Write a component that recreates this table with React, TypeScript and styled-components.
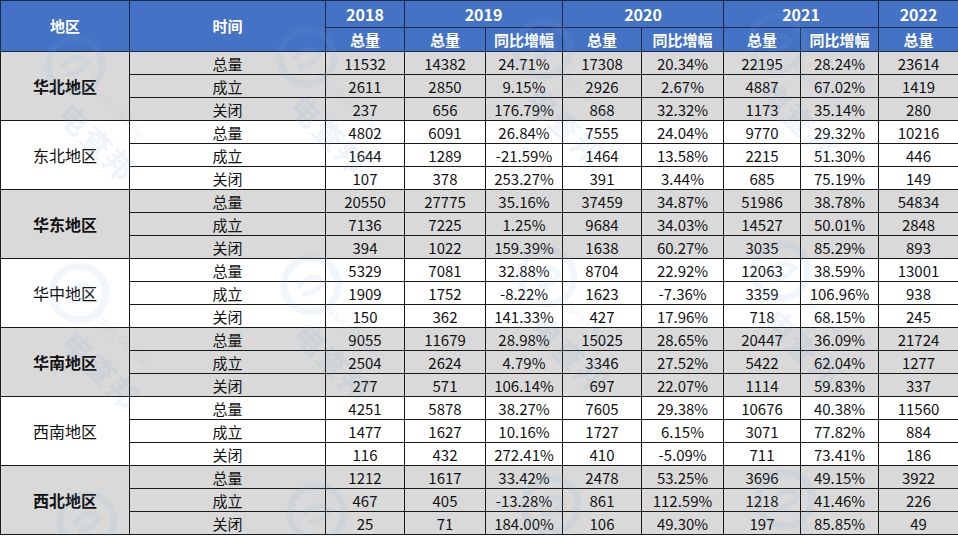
import React from 'react';
import styled, { createGlobalStyle } from 'styled-components';

const GlobalStyle = createGlobalStyle`
    html, body {
        margin: 0;
        padding: 0;
        background: #ffffff;
    }
    body {
        font-family: "Noto Sans CJK SC", "Noto Sans", sans-serif;
        color: #000;
    }
`;

type Group = {
    region: string;
    rows: string[][];
};

const labels = ['总量', '成立', '关闭'];

const groups: Group[] = [
    {
        region: '华北地区',
        rows: [
            ['11532', '14382', '24.71%', '17308', '20.34%', '22195', '28.24%', '23614'],
            ['2611', '2850', '9.15%', '2926', '2.67%', '4887', '67.02%', '1419'],
            ['237', '656', '176.79%', '868', '32.32%', '1173', '35.14%', '280'],
        ],
    },
    {
        region: '东北地区',
        rows: [
            ['4802', '6091', '26.84%', '7555', '24.04%', '9770', '29.32%', '10216'],
            ['1644', '1289', '-21.59%', '1464', '13.58%', '2215', '51.30%', '446'],
            ['107', '378', '253.27%', '391', '3.44%', '685', '75.19%', '149'],
        ],
    },
    {
        region: '华东地区',
        rows: [
            ['20550', '27775', '35.16%', '37459', '34.87%', '51986', '38.78%', '54834'],
            ['7136', '7225', '1.25%', '9684', '34.03%', '14527', '50.01%', '2848'],
            ['394', '1022', '159.39%', '1638', '60.27%', '3035', '85.29%', '893'],
        ],
    },
    {
        region: '华中地区',
        rows: [
            ['5329', '7081', '32.88%', '8704', '22.92%', '12063', '38.59%', '13001'],
            ['1909', '1752', '-8.22%', '1623', '-7.36%', '3359', '106.96%', '938'],
            ['150', '362', '141.33%', '427', '17.96%', '718', '68.15%', '245'],
        ],
    },
    {
        region: '华南地区',
        rows: [
            ['9055', '11679', '28.98%', '15025', '28.65%', '20447', '36.09%', '21724'],
            ['2504', '2624', '4.79%', '3346', '27.52%', '5422', '62.04%', '1277'],
            ['277', '571', '106.14%', '697', '22.07%', '1114', '59.83%', '337'],
        ],
    },
    {
        region: '西南地区',
        rows: [
            ['4251', '5878', '38.27%', '7605', '29.38%', '10676', '40.38%', '11560'],
            ['1477', '1627', '10.16%', '1727', '6.15%', '3071', '77.82%', '884'],
            ['116', '432', '272.41%', '410', '-5.09%', '711', '73.41%', '186'],
        ],
    },
    {
        region: '西北地区',
        rows: [
            ['1212', '1617', '33.42%', '2478', '53.25%', '3696', '49.15%', '3922'],
            ['467', '405', '-13.28%', '861', '112.59%', '1218', '41.46%', '226'],
            ['25', '71', '184.00%', '106', '49.30%', '197', '85.85%', '49'],
        ],
    },
];

const colWidths = [129, 196, 79, 81, 77, 79, 82, 77, 78, 80];

const watermarks = [
    { x: 40, y: 30 }, { x: 272, y: 22 }, { x: 508, y: 14 }, { x: 742, y: 8 },
    { x: 44, y: 258 }, { x: 276, y: 250 }, { x: 512, y: 242 }, { x: 746, y: 236 },
    { x: 52, y: 486 }, { x: 282, y: 478 }, { x: 516, y: 470 }, { x: 750, y: 464 },
];

export default function App() {
    return (
        <>
            <GlobalStyle />
            <Page>
                <Table>
                    <colgroup>
                        {colWidths.map((w, i) => (
                            <col key={i} style={{ width: w }} />
                        ))}
                    </colgroup>
                    <thead>
                        <HeadRow $h={27}>
                            <HeadCell rowSpan={2}>地区</HeadCell>
                            <HeadCell rowSpan={2}>时间</HeadCell>
                            <YearCell>2018</YearCell>
                            <YearCell colSpan={2}>2019</YearCell>
                            <YearCell colSpan={2}>2020</YearCell>
                            <YearCell colSpan={2}>2021</YearCell>
                            <YearCell>2022</YearCell>
                        </HeadRow>
                        <HeadRow $h={24}>
                            <HeadCell>总量</HeadCell>
                            <HeadCell>总量</HeadCell>
                            <HeadCell>同比增幅</HeadCell>
                            <HeadCell>总量</HeadCell>
                            <HeadCell>同比增幅</HeadCell>
                            <HeadCell>总量</HeadCell>
                            <HeadCell>同比增幅</HeadCell>
                            <HeadCell>总量</HeadCell>
                        </HeadRow>
                    </thead>
                    <tbody>
                        {groups.map((g, gi) =>
                            g.rows.map((r, ri) => (
                                <DataRow key={`${gi}-${ri}`} $shaded={gi % 2 === 0}>
                                    {ri === 0 && (
                                        <RegionCell rowSpan={3} $bold={gi % 2 === 0}>
                                            {g.region}
                                        </RegionCell>
                                    )}
                                    <LabelCell>{labels[ri]}</LabelCell>
                                    {r.map((v, vi) => (
                                        <NumCell key={vi}>{v}</NumCell>
                                    ))}
                                </DataRow>
                            ))
                        )}
                    </tbody>
                </Table>
                <Overlay>
                    {watermarks.map((p, i) => (
                        <Mark key={i} style={{ left: p.x, top: p.y }}>
                            <svg width="70" height="70" viewBox="0 0 70 70">
                                <circle cx="35" cy="35" r="27" fill="none" stroke="#7fb2e0" strokeWidth="7" />
                                <path d="M22 38 Q35 20 48 32 Q40 44 26 44" fill="none" stroke="#7fb2e0" strokeWidth="5" />
                            </svg>
                            <MarkText>电查邦</MarkText>
                            <MarkSub>Apply Online</MarkSub>
                        </Mark>
                    ))}
                </Overlay>
            </Page>
        </>
    );
}

const Page = styled.div`
    position: relative;
    width: 958px;
    height: 536px;
    overflow: hidden;
    background: #fff;
`;

const Table = styled.table`
    width: 958px;
    table-layout: fixed;
    border-collapse: collapse;
    border: 1px solid #1a1a1a;
`;

const HeadRow = styled.tr<{ $h: number }>`
    height: ${(p) => p.$h}px;
    background: #4472c4;
`;

const HeadCell = styled.th`
    padding: 0;
    border: 1px solid #1c2a48;
    color: #ffffff;
    font-size: 15px;
    font-weight: 700;
    line-height: 18px;
    text-align: center;
    vertical-align: middle;
`;

const YearCell = styled(HeadCell)`
    font-size: 16px;
`;

const DataRow = styled.tr<{ $shaded: boolean }>`
    height: 23px;
    background: ${(p) => (p.$shaded ? '#d9d9d9' : '#ffffff')};
`;

const Cell = styled.td`
    padding: 0;
    border: 1px solid #1a1a1a;
    text-align: center;
    vertical-align: middle;
    color: #111;
    line-height: 18px;
    white-space: nowrap;
`;

const RegionCell = styled(Cell)<{ $bold: boolean }>`
    font-size: 16px;
    font-weight: ${(p) => (p.$bold ? 700 : 400)};
`;

const LabelCell = styled(Cell)`
    font-size: 15px;
    padding-top: 2px;
`;

const NumCell = styled(Cell)`
    font-size: 15px;
    padding-top: 2px;
`;

const Overlay = styled.div`
    position: absolute;
    inset: 0;
    pointer-events: none;
    opacity: 0.1;
`;

const Mark = styled.div`
    position: absolute;
    width: 160px;
    height: 150px;
`;

const MarkText = styled.span`
    position: absolute;
    left: 40px;
    top: 62px;
    transform: rotate(45deg);
    transform-origin: left top;
    font-size: 30px;
    font-weight: 700;
    color: #6a9fd2;
    letter-spacing: 2px;
    white-space: nowrap;
`;

const MarkSub = styled.span`
    position: absolute;
    left: 58px;
    top: 48px;
    transform: rotate(45deg);
    transform-origin: left top;
    font-size: 12px;
    color: #6a9fd2;
    white-space: nowrap;
`;
